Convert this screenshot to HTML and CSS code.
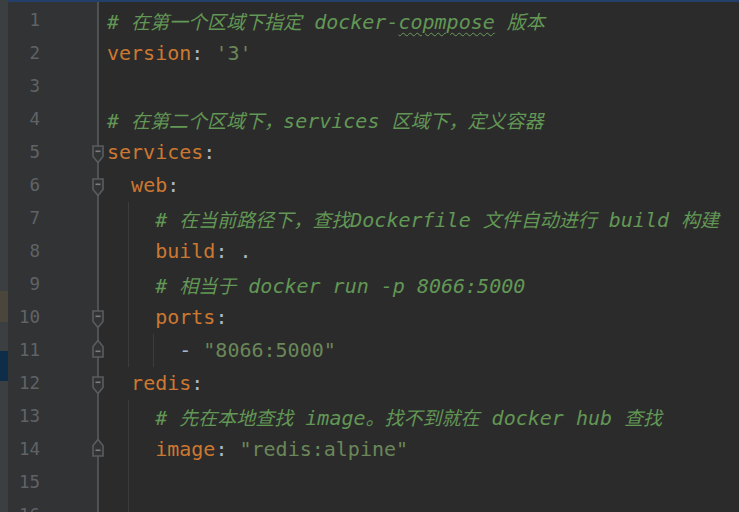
FILE: index.html
```html
<!DOCTYPE html>
<html>
<head>
<meta charset="utf-8">
<link rel="stylesheet" href="styles.css">
</head>
<body>
<div class="strip">
  <div class="sp1"></div>
  <div class="brown"></div>
  <div class="sp2"></div>
  <div class="blue"></div>
</div>
<div class="main">
  <div class="topbar"></div>
  <div class="lines">
    <div class="row"><div class="ln">1</div><div class="fold"></div><div class="code"><span class="c"># <span class="zh">在第一个区域下指定</span> docker-<span class="typo">copmpose</span> <span class="zh">版本</span></span></div></div>
    <div class="row"><div class="ln">2</div><div class="fold"></div><div class="code"><span class="k">version</span>: <span class="s">'3'</span></div></div>
    <div class="row"><div class="ln">3</div><div class="fold"></div><div class="code"></div></div>
    <div class="row"><div class="ln">4</div><div class="fold"></div><div class="code"><span class="c"># <span class="zh">在第二个区域下，</span>services <span class="zh">区域下，定义容器</span></span></div></div>
    <div class="row"><div class="ln">5</div><div class="fold"><svg class="marker start" width="12" height="19" viewBox="0 0 12 19"><path d="M1 1H11V11.5L6 17.5L1 11.5Z"/><rect x="3.5" y="5.5" width="5" height="1.6"/></svg></div><div class="code"><span class="k">services</span>:</div></div>
    <div class="row"><div class="ln">6</div><div class="fold"><svg class="marker start" width="12" height="19" viewBox="0 0 12 19"><path d="M1 1H11V11.5L6 17.5L1 11.5Z"/><rect x="3.5" y="5.5" width="5" height="1.6"/></svg></div><div class="code">  <span class="k">web</span>:</div></div>
    <div class="row"><div class="ln">7</div><div class="fold"></div><div class="code g1">    <span class="c"># <span class="zh">在当前路径下，查找</span>Dockerfile <span class="zh">文件自动进行</span> build <span class="zh">构建</span></span></div></div>
    <div class="row"><div class="ln">8</div><div class="fold"></div><div class="code g1">    <span class="k">build</span>: .</div></div>
    <div class="row"><div class="ln">9</div><div class="fold"></div><div class="code g1">    <span class="c"># <span class="zh">相当于</span> docker run -p 8066:5000</span></div></div>
    <div class="row"><div class="ln">10</div><div class="fold"><svg class="marker start" width="12" height="19" viewBox="0 0 12 19"><path d="M1 1H11V11.5L6 17.5L1 11.5Z"/><rect x="3.5" y="5.5" width="5" height="1.6"/></svg></div><div class="code g1">    <span class="k">ports</span>:</div></div>
    <div class="row"><div class="ln">11</div><div class="fold"><svg class="marker end" width="12" height="19" viewBox="0 0 12 19"><path d="M1 18H11V7.5L6 1.5L1 7.5Z"/><rect x="3.5" y="11.5" width="5" height="1.6"/></svg></div><div class="code g12">      - <span class="s">"8066:5000"</span></div></div>
    <div class="row"><div class="ln">12</div><div class="fold"><svg class="marker start" width="12" height="19" viewBox="0 0 12 19"><path d="M1 1H11V11.5L6 17.5L1 11.5Z"/><rect x="3.5" y="5.5" width="5" height="1.6"/></svg></div><div class="code">  <span class="k">redis</span>:</div></div>
    <div class="row"><div class="ln">13</div><div class="fold"></div><div class="code g1">    <span class="c"># <span class="zh">先在本地查找</span> image<span class="zh">。找不到就在</span> docker hub <span class="zh">查找</span></span></div></div>
    <div class="row"><div class="ln">14</div><div class="fold"><svg class="marker end" width="12" height="19" viewBox="0 0 12 19"><path d="M1 18H11V7.5L6 1.5L1 7.5Z"/><rect x="3.5" y="11.5" width="5" height="1.6"/></svg></div><div class="code g1">    <span class="k">image</span>: <span class="s">"redis:alpine"</span></div></div>
    <div class="row"><div class="ln">15</div><div class="fold"></div><div class="code g1"></div></div>
    <div class="row"><div class="ln">16</div><div class="fold"></div><div class="code g1"></div></div>
  </div>
</div>
</body>
</html>
```

FILE: styles.css
```css
html, body {
  margin: 0;
  padding: 0;
}
body {
  background: #2b2b2b;
  display: flex;
  height: 512px;
  overflow: hidden;
  font-family: "DejaVu Sans Mono", monospace;
}
.strip {
  width: 8px;
  flex: none;
  background: #3c3f41;
  display: flex;
  flex-direction: column;
}
.strip .sp1 { height: 291px; }
.strip .brown { height: 31px; background: #4a463b; }
.strip .sp2 { height: 29px; }
.strip .blue { height: 30px; background: #0e2d48; }

.main {
  flex: 1;
  display: flex;
  flex-direction: column;
  background: linear-gradient(to right, #313335 0 89px, #4f5153 89px 91px, #2b2b2b 91px);
}
.topbar {
  height: 2px;
  flex: none;
  background: #22406a;
}
.lines {
  padding-top: 2px;
}
.row {
  display: flex;
  height: 33px;
  flex: none;
}
.ln {
  width: 32px;
  flex: none;
  text-align: right;
  color: #606366;
  font-size: 17.5px;
  line-height: 33px;
}
.fold {
  width: 59px;
  flex: none;
  position: relative;
}
.marker {
  position: absolute;
  left: 52px;
}
.marker.start { top: 9px; }
.marker.end { top: 5px; }
.marker path {
  fill: #313335;
  stroke: #5a5d60;
  stroke-width: 1.6;
  stroke-linejoin: miter;
}
.marker rect {
  fill: #7a7d80;
}
.code {
  flex: 1;
  padding-left: 8px;
  white-space: pre;
  font-size: 20px;
  line-height: 33px;
  color: #a9b7c6;
}
.code.g1 {
  background: linear-gradient(to right, transparent 29px, #3c3c3c 29px 30px, transparent 30px);
}
.code.g12 {
  background:
    linear-gradient(to right, transparent 29px, #3c3c3c 29px 30px, transparent 30px),
    linear-gradient(to right, transparent 54px, #3c3c3c 54px 55px, transparent 55px);
}
.k { color: #cc7832; }
.s { color: #6a8759; }
.c { color: #629755; font-style: italic; }
.zh {
  font-family: "Noto Sans CJK SC", sans-serif;
  font-size: 19px;
}
.typo {
  text-decoration-line: underline;
  text-decoration-style: wavy;
  text-decoration-color: #6a9b5f;
  text-decoration-thickness: 1px;
  text-underline-offset: 3px;
}
```
